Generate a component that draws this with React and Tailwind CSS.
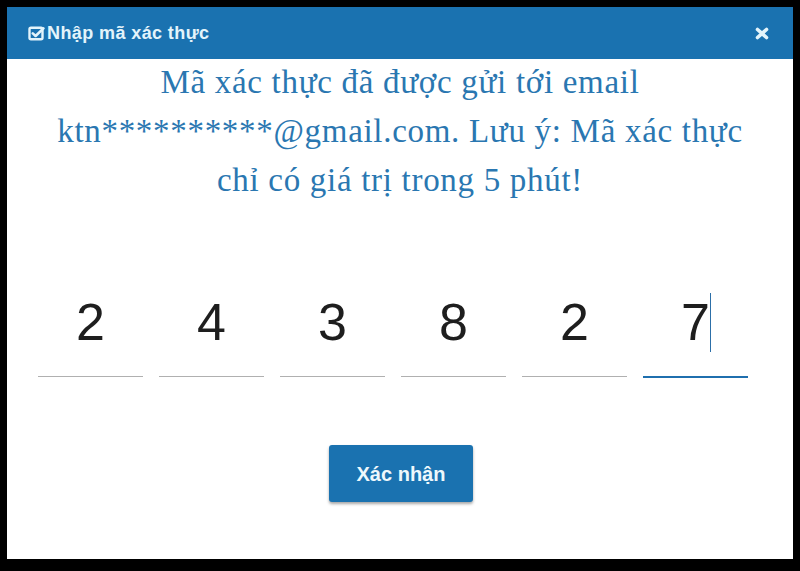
import React from "react";

const digits = ["2", "4", "3", "8", "2", "7"];

const sans = { fontFamily: '"Liberation Sans", Arial, sans-serif' };
const serif = { fontFamily: '"Liberation Serif", "Times New Roman", serif' };

function CheckSquare() {
  return (
    <svg width="17" height="15" viewBox="0 0 17 15" className="mr-[2px]">
      <rect x="1.5" y="1.8" width="13" height="11.5" rx="1.5" fill="none" stroke="#e3f4fb" strokeWidth="2.4" />
      <path d="M4.8 7.4 L7.6 10 L15.4 2.4" fill="none" stroke="#e3f4fb" strokeWidth="2.6" strokeLinecap="round" strokeLinejoin="round" />
    </svg>
  );
}

export default function App() {
  return (
    <div className="w-[800px] h-[571px] bg-black pt-[7px] pl-[7px]">
      <div className="w-[786px] h-[552px] bg-white flex flex-col">
        {/* title bar */}
        <div className="h-[52px] shrink-0 bg-[#1a72b0] flex items-center justify-between pl-[21px] pr-[24px]">
          <div className="flex items-center text-[18px] text-[#e3f4fb] font-bold tracking-[0.4px]" style={sans}>
            <CheckSquare />
            <span>Nhập mã xác thực</span>
          </div>
          <svg width="14" height="13" viewBox="0 0 14 13">
            <path d="M2.5 2.5 L11.5 10.5 M11.5 2.5 L2.5 10.5" stroke="#e3f4fb" strokeWidth="3.6" strokeLinecap="round" />
          </svg>
        </div>

        {/* message */}
        <div
          className="-mt-[1px] text-center text-[#2a77b1] text-[33px] leading-[49px] tracking-[0.7px]"
          style={serif}
        >
          Mã xác thực đã được gửi tới email
          <br />
          ktn**********@gmail.com. Lưu ý: Mã xác thực
          <br />
          chỉ có giá trị trong 5 phút!
        </div>

        {/* code inputs */}
        <div className="mt-[85px] ml-[31px] flex items-start gap-[16px]">
          {digits.map((d, i) => {
            const active = i === digits.length - 1;
            return (
              <div
                key={i}
                className={`w-[105px] pt-[6px] flex justify-center ${
                  active ? "h-[88px] border-b-2 border-[#1f6fae]" : "h-[87px] border-b border-[#b0b0b0]"
                }`}
              >
                <div className="relative text-[52px] text-[#1e1e1e] leading-none" style={sans}>
                  {d}
                  {active && (
                    <span className="absolute left-full top-[-3px] w-[1px] h-[59px] bg-[#2c6fa8]" />
                  )}
                </div>
              </div>
            );
          })}
        </div>

        {/* submit */}
        <div className="mt-[67px] flex justify-center pl-[2px]">
          <button
            className="w-[144px] h-[57px] rounded-[3px] bg-[#1a72b0] text-[#eef8fc] text-[20px] font-bold shadow-[0_2px_3px_rgba(0,0,0,0.35)]"
            style={sans}
          >
            Xác nhận
          </button>
        </div>
      </div>
    </div>
  );
}
